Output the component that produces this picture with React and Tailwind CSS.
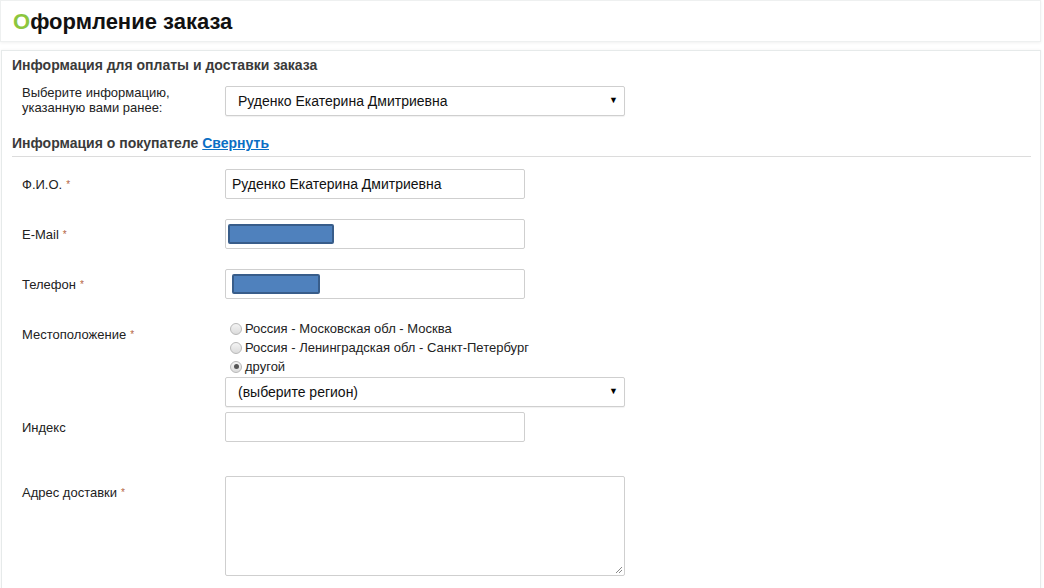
import React from "react";

const font = { fontFamily: '"Liberation Sans", Arial, sans-serif' };

function Star() {
  return <span className="ml-[4px] text-[10px] text-[#b5653f] align-top">*</span>;
}

function Label({ children, required, top = "pt-[8px]" }) {
  return (
    <div className={`w-[213px] shrink-0 pl-[10px] ${top} text-[13px] leading-[15px] text-[#222]`}>
      {children}
      {required && <Star />}
    </div>
  );
}

function TextBox({ children }) {
  return (
    <div className="w-[300px] h-[30px] border border-[#cfcfcf] rounded-[2px] bg-white flex items-center px-[6px] text-[14px] text-[#111]">
      {children}
    </div>
  );
}

function SelectBox({ value }) {
  return (
    <div className="w-[400px] h-[30px] border border-[#cfcfcf] rounded-[2px] bg-white flex items-center justify-between pl-[12px] pr-[6px] text-[14px] text-[#111] shadow-[0_1px_1px_rgba(0,0,0,0.06)]">
      <span>{value}</span>
      <span className="text-[9px] text-black">▼</span>
    </div>
  );
}

function Radio({ checked, label }) {
  return (
    <div className="flex items-center h-[19px] text-[13px] text-[#222]">
      <span className="w-[12px] h-[12px] ml-[5px] mr-[3px] rounded-full border border-[#b8b8b8] bg-gradient-to-b from-[#f4f4f4] to-[#dcdcdc] flex items-center justify-center">
        {checked && <span className="w-[5px] h-[5px] rounded-full bg-[#555]" />}
      </span>
      {label}
    </div>
  );
}

function Blob({ w, ml }) {
  return (
    <div
      className={`h-[20px] ${w} ${ml} bg-[#4f81bd] border-2 border-[#385d8a] rounded-[2px]`}
    />
  );
}

export default function App() {
  return (
    <div className="w-[1044px] h-[588px] bg-white overflow-hidden" style={font}>
      {/* Title */}
      <div className="w-[1041px] h-[42px] bg-white border border-[#eef0f0] shadow-[0_1px_3px_rgba(0,0,0,0.06)] flex items-center pl-[12px]">
        <h1 className="text-[22px] font-bold text-[#111]">
          <span className="text-[#8cc63e]">О</span>формление заказа
        </h1>
      </div>

      {/* Form panel */}
      <div className="ml-[1px] mt-[8px] w-[1040px] h-[560px] bg-white border border-[#e6eaea] shadow-[0_0_3px_rgba(0,0,0,0.05)] pl-[10px] pr-[9px] pt-[6px]">
        <h2 className="text-[14px] font-bold text-[#3a3a3a] leading-[16px]">
          Информация для оплаты и доставки заказа
        </h2>

        <div className="flex mt-[12px]">
          <Label top="pt-[0px]">
            Выберите информацию,
            <br />
            указанную вами ранее:
          </Label>
          <div className="mt-[1px]">
            <SelectBox value="Руденко Екатерина Дмитриевна" />
          </div>
        </div>

        <div className="mt-[19px] text-[14px] font-bold text-[#3a3a3a] leading-[16px]">
          Информация о покупателе{" "}
          <a href="#" className="text-[#0b6fc4] underline">
            Свернуть
          </a>
        </div>
        <div className="mt-[5px] h-px bg-[#dcdcdc]" />

        <div className="flex mt-[12px]">
          <Label required>Ф.И.О.</Label>
          <TextBox>Руденко Екатерина Дмитриевна</TextBox>
        </div>

        <div className="flex mt-[20px]">
          <Label required>E-Mail</Label>
          <TextBox>
            <Blob w="w-[106px]" ml="-ml-[4px]" />
          </TextBox>
        </div>

        <div className="flex mt-[20px]">
          <Label required>Телефон</Label>
          <TextBox>
            <Blob w="w-[88px]" ml="ml-0" />
          </TextBox>
        </div>

        <div className="flex mt-[20px]">
          <Label required>Местоположение</Label>
          <div>
            <Radio label="Россия - Московская обл - Москва" />
            <Radio label="Россия - Ленинградская обл - Санкт-Петербург" />
            <Radio checked label="другой" />
            <div className="mt-[1px]">
              <SelectBox value="(выберите регион)" />
            </div>
          </div>
        </div>

        <div className="flex mt-[5px]">
          <Label>Индекс</Label>
          <TextBox />
        </div>

        <div className="flex mt-[34px]">
          <Label required top="pt-[9px]">Адрес доставки</Label>
          <div className="relative w-[400px] h-[100px] border border-[#cfcfcf] rounded-[2px] bg-white">
            <svg className="absolute right-[1px] bottom-[1px]" width="8" height="8" viewBox="0 0 8 8">
              <path d="M7 1 L1 7 M7 4 L4 7" stroke="#888" strokeWidth="1" />
            </svg>
          </div>
        </div>
      </div>
    </div>
  );
}
